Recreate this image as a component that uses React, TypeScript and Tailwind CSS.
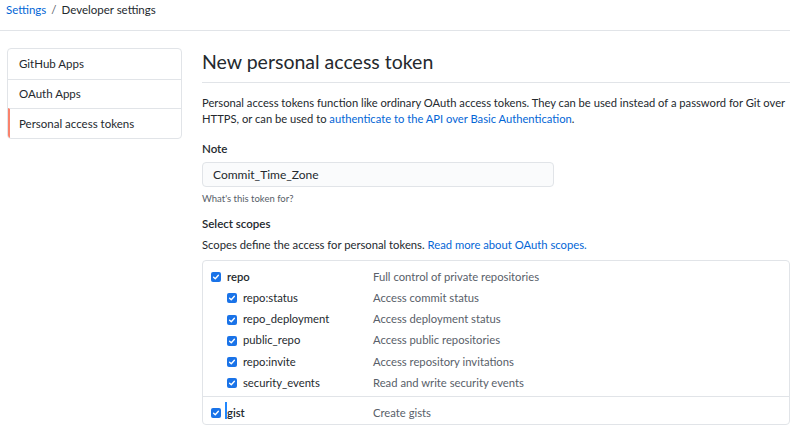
import React from 'react';

const font = { fontFamily: 'Lato, "Open Sans", sans-serif' };

const navItems = ['GitHub Apps', 'OAuth Apps', 'Personal access tokens'];

type Scope = { name: string; desc: string; sub?: boolean; cursor?: boolean };

const repoScopes: Scope[] = [
  { name: 'repo', desc: 'Full control of private repositories' },
  { name: 'repo:status', desc: 'Access commit status', sub: true },
  { name: 'repo_deployment', desc: 'Access deployment status', sub: true },
  { name: 'public_repo', desc: 'Access public repositories', sub: true },
  { name: 'repo:invite', desc: 'Access repository invitations', sub: true },
  { name: 'security_events', desc: 'Read and write security events', sub: true },
];

const Check = () => (
  <span className="flex h-[10px] w-[10px] shrink-0 items-center justify-center rounded-[2px] bg-[#1a73e8]">
    <svg viewBox="0 0 10 10" className="h-[8px] w-[8px]">
      <path d="M2 5.2 L4.1 7.2 L8 2.8" fill="none" stroke="white" strokeWidth="1.7" strokeLinecap="round" strokeLinejoin="round" />
    </svg>
  </span>
);

const ScopeRow = ({ scope }: { scope: Scope }) => (
  <div className={`flex h-[21.2px] items-center ${scope.sub ? 'pl-[24px]' : 'pl-[8px]'}`}>
    <Check />
    <span className={`relative ${scope.sub ? 'w-[136px]' : 'w-[152px]'} pl-[6px] text-[11.25px] text-[#24292e]`}>
      {scope.cursor && <span className="absolute left-[4px] top-[-3px] h-[17px] w-[2px] bg-[#2188ff]" />}
      {scope.sub ? scope.name : <span className="font-semibold">{scope.name}</span>}
    </span>
    <span className="text-[11.25px] text-[#586069]">{scope.desc}</span>
  </div>
);

export default function App() {
  return (
    <div className="h-[425px] w-[790px] overflow-hidden bg-white text-[#24292e]" style={font}>
      <div className="flex h-[31px] items-start border-b border-[#e1e4e8] pl-[6px] pt-[1px] text-[11.5px]">
        <a className="text-[#0366d6]">Settings</a>
        <span className="mx-[5px] text-[#586069]">/</span>
        <span>Developer settings</span>
      </div>

      <div className="flex pt-[17px]">
        <div className="ml-[7px] w-[175px] shrink-0">
          <div className="overflow-hidden rounded-[4px] border border-[#e1e4e8]">
            {navItems.map((item, i) => (
              <div
                key={item}
                className={`flex h-[29.5px] items-center text-[11.5px] ${i > 0 ? 'border-t border-[#e1e4e8]' : ''} ${
                  i === 2 ? 'border-l-2 border-l-[#f9826c] pl-[9px]' : 'pl-[11px]'
                }`}
              >
                {item}
              </div>
            ))}
          </div>
        </div>

        <div className="ml-[20px] w-[588px] shrink-0">
          <div className="border-b border-[#e1e4e8] pb-[6px]">
            <h1 className="text-[19.5px] font-normal leading-[28px]">New personal access token</h1>
          </div>

          <p className="mt-[12px] text-[11.2px] leading-[16px] whitespace-nowrap">
            Personal access tokens function like ordinary OAuth access tokens. They can be used instead of a password for Git over
            <br />
            HTTPS, or can be used to <a className="text-[#0366d6]">authenticate to the API over Basic Authentication</a>.
          </p>

          <div className="mt-[13px] text-[11.5px] font-semibold">Note</div>
          <div className="mt-[5px] flex h-[25px] w-[352px] items-center rounded-[4px] border border-[#e1e4e8] bg-[#fafbfc] pl-[10px] text-[12px]">
            Commit_Time_Zone
          </div>
          <div className="mt-[5px] text-[9.5px] text-[#586069]">What's this token for?</div>

          <div className="mt-[8px] text-[11.5px] font-semibold">Select scopes</div>
          <div className="mt-[5px] text-[11.25px]">
            Scopes define the access for personal tokens. <a className="text-[#0366d6]">Read more about OAuth scopes.</a>
          </div>

          <div className="mt-[6px] rounded-[4px] border border-[#e1e4e8] pt-[6px]">
            <div className="pb-[2px]">
              {repoScopes.map((s) => (
                <ScopeRow key={s.name} scope={s} />
              ))}
            </div>
            <div className="border-t border-[#e1e4e8] pt-[6px]">
              <ScopeRow scope={{ name: 'gist', desc: 'Create gists', cursor: true }} />
            </div>
          </div>
        </div>
      </div>
    </div>
  );
}
